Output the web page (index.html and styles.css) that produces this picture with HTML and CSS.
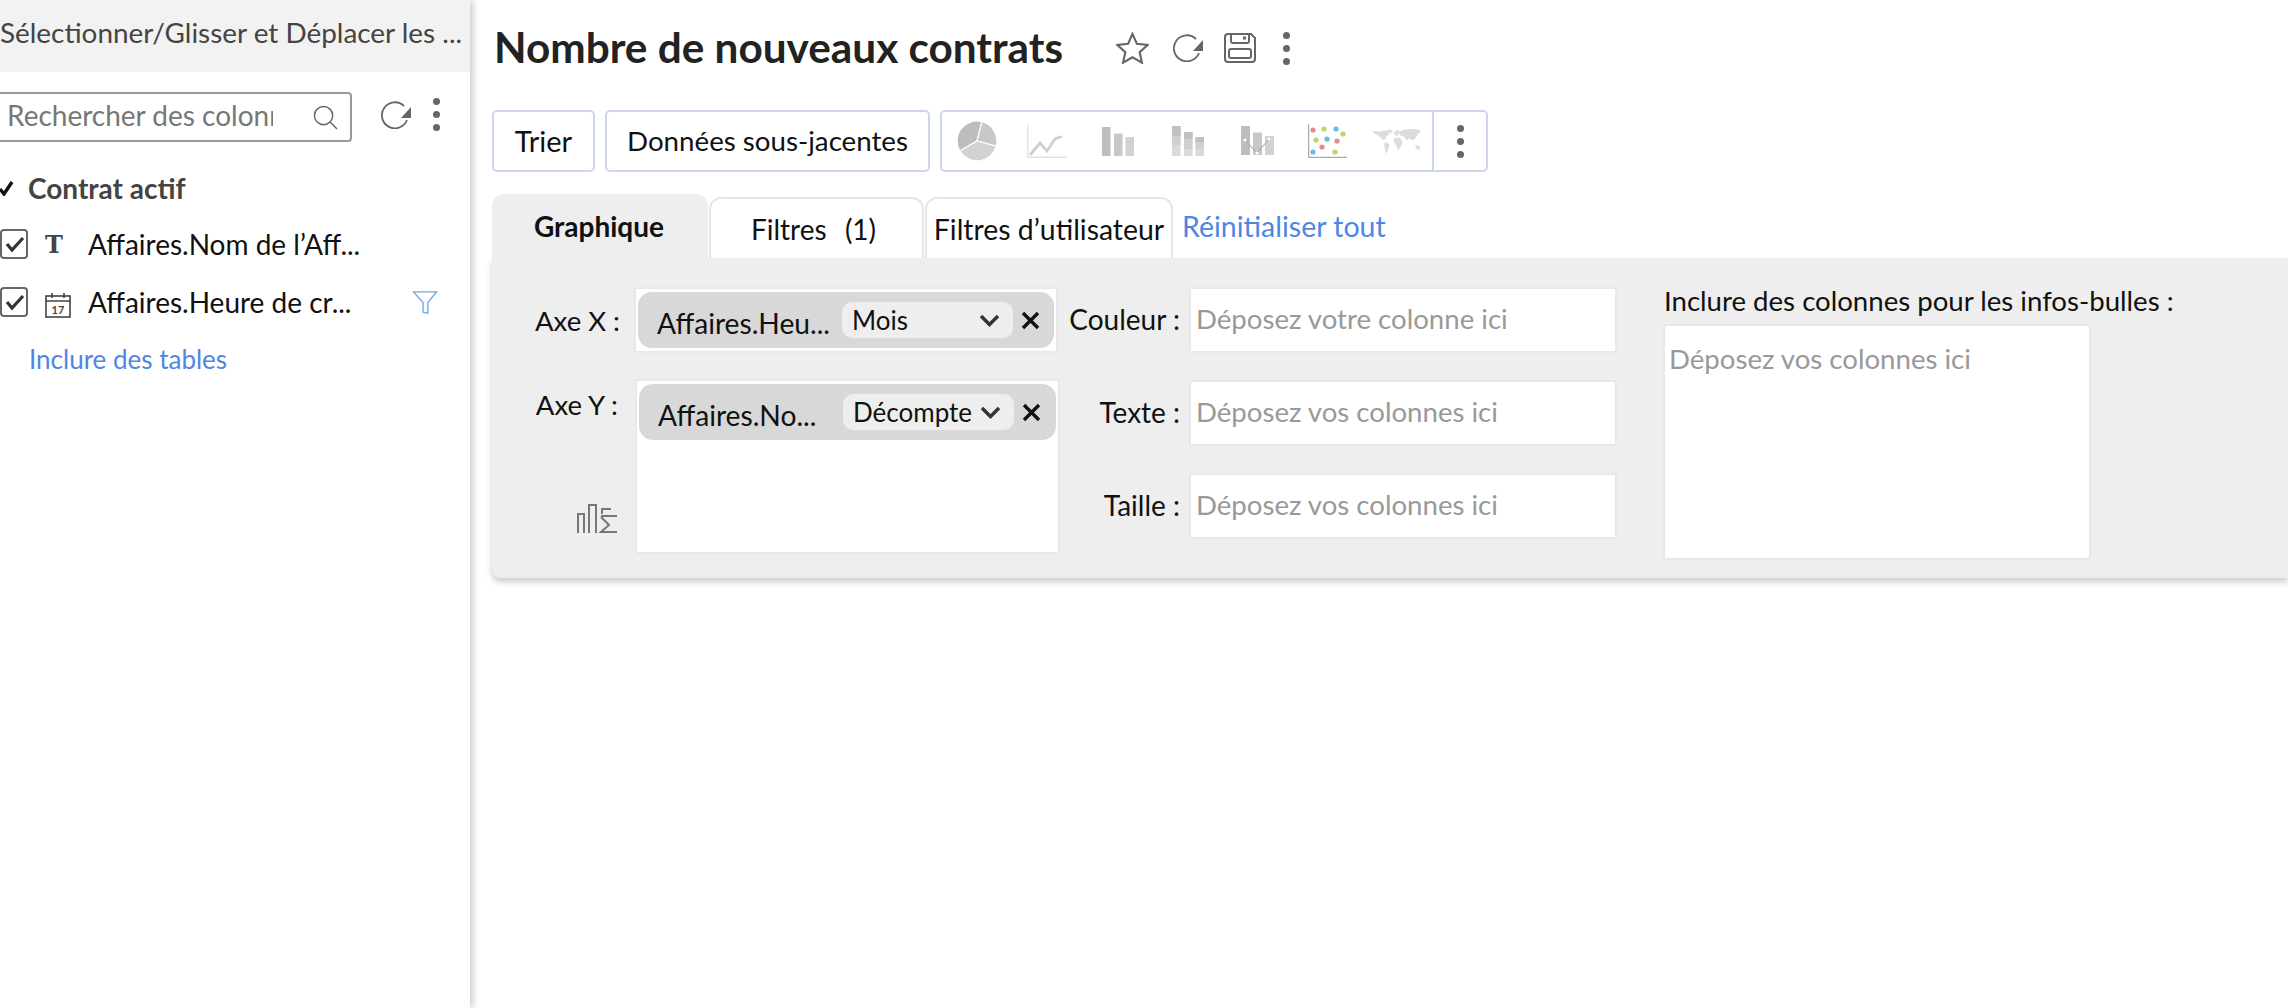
FILE: index.html
```html
<!DOCTYPE html>
<html lang="fr">
	<head>
		<meta charset="utf-8" />
		<title>Nombre de nouveaux contrats</title>
		<link rel="stylesheet" href="styles.css">
	</head>
	<body>
		<aside class="sidebar">
			<div class="sidebar-head">Sélectionner/Glisser et Déplacer les ...</div>
			<div class="search-row">
				<div class="search">
					<input class="search-input" type="text" placeholder="Rechercher des colonnes" />
					<svg viewBox="0 0 26 26" width="25" height="25" fill="none" stroke="#666" stroke-width="1.5"><circle cx="11" cy="11" r="9.5"/><path d="M17.5 17.5l7.5 7.5"/></svg>
				</div>
				<svg class="reload" viewBox="0 0 32 28" width="32" height="28" fill="none" stroke="#666" stroke-width="1.8"><path d="M27 19a13 13 0 1 1-3-14"/><path d="M31 6v11H21z" fill="#666" stroke="none"/></svg>
				<div class="dots side-dots"><i></i><i></i><i></i></div>
			</div>
			<div class="group">
				<svg class="tick" viewBox="0 0 14 16" width="14" height="16" fill="none" stroke="#111" stroke-width="3.4"><path d="M0 9l4 5 8-12"/></svg>
				<span>Contrat actif</span>
			</div>
			<div class="col-row">
				<span class="check"><svg viewBox="0 0 20 20" width="20" height="20" fill="none" stroke="#333" stroke-width="3.2"><path d="M2 10l5 6 11-12"/></svg></span>
				<span class="type-t">T</span>
				<span class="col-name">Affaires.Nom de l’Aff...</span>
			</div>
			<div class="col-row col-row-date">
				<span class="check"><svg viewBox="0 0 20 20" width="20" height="20" fill="none" stroke="#333" stroke-width="3.2"><path d="M2 10l5 6 11-12"/></svg></span>
				<svg class="type-date" viewBox="0 0 26 26" width="26" height="26" fill="none" stroke="#444" stroke-width="1.6"><rect x="1" y="4" width="24" height="21"/><path d="M1 9h24M7 1v5M19 1v5"/><text x="13" y="22" font-size="11" font-weight="700" fill="#444" stroke="none" text-anchor="middle">17</text></svg>
				<span class="col-name">Affaires.Heure de cr...</span>
				<svg class="filter-icon" viewBox="0 0 26 26" width="26" height="25" fill="none" stroke="#6ea6e6" stroke-width="1.4"><path d="M1 2h24L16 13v11l-5-1V13z"/></svg>
			</div>
			<a class="include">Inclure des tables</a>
		</aside>

		<main class="main">
			<div class="title-row">
				<h1>Nombre de nouveaux contrats</h1>
				<div class="title-icons">
					<svg viewBox="0 0 34 33" width="33" height="32" fill="none" stroke="#666" stroke-width="2.2"><path d="M17 2l4.6 10.2 11 1.2-8.2 7.4 2.3 10.8-9.7-5.5-9.7 5.5 2.3-10.8-8.2-7.4 11-1.2z"/></svg>
					<svg class="icon-reload" viewBox="0 0 32 28" width="32" height="28" fill="none" stroke="#666" stroke-width="1.8"><path d="M27 19a13 13 0 1 1-3-14"/><path d="M31 6v11H21z" fill="#666" stroke="none"/></svg>
					<svg class="icon-save" viewBox="0 0 32 30" width="32" height="30" fill="none" stroke="#666" stroke-width="2"><path d="M1 4a3 3 0 0 1 3-3h23l4 4v21a3 3 0 0 1-3 3H4a3 3 0 0 1-3-3z"/><path d="M7 1v7a2 2 0 0 0 2 2h14a2 2 0 0 0 2-2V1"/><rect x="5" y="16" width="22" height="9" rx="2"/><path d="M19 3.500h3v3h-3z" fill="#666" stroke="none"/></svg>
					<div class="dots title-dots"><i></i><i></i><i></i></div>
				</div>
			</div>

			<div class="toolbar">
				<button class="tool-btn btn-sort">Trier</button>
				<button class="tool-btn btn-data">Données sous-jacentes</button>
				<div class="chart-picker">
					<div class="chart-icons">
						<svg class="chart-pie" viewBox="0 0 40 40" width="40" height="40" stroke="#fff" stroke-width="1.2"><path d="M20 20L25 .6A20 20 0 0 0 2.800 30.100z" fill="#bdbdbd"/><path d="M20 20L25 .6A20 20 0 0 1 39.300 25.200z" fill="#c8c8c8"/><path d="M20 20L39.300 25.200A20 20 0 0 1 2.800 30.100z" fill="#d2d2d2"/></svg>
						<svg class="chart-line" viewBox="0 0 40 33" width="40" height="33" fill="none"><path d="M.7 0v32.300H40" stroke="#e2e2e2" stroke-width="1.4"/><path d="M3 30l10-12 7 8 8-12 7-2.500" stroke="#d0d0d0" stroke-width="2.800"/></svg>
						<svg class="chart-bar" viewBox="0 0 32 29" width="32" height="29"><rect width="8.500" height="29" fill="#bdbdbd"/><rect x="12" y="6.500" width="8.500" height="22.500" fill="#c8c8c8"/><rect x="23.500" y="10" width="8.500" height="19" fill="#d2d2d2"/></svg>
						<svg class="chart-stack" viewBox="0 0 32 30" width="32" height="30"><rect width="8.500" height="30" fill="#dadada"/><rect width="8.500" height="19" fill="#cfcfcf"/><rect width="8.500" height="9.500" fill="#c0c0c0"/><rect x="12" y="6" width="8.500" height="24" fill="#dadada"/><rect x="12" y="6" width="8.500" height="17" fill="#cfcfcf"/><rect x="12" y="6" width="8.500" height="7" fill="#c0c0c0"/><rect x="23.500" y="11" width="8.500" height="19" fill="#dadada"/><rect x="23.500" y="11" width="8.500" height="12" fill="#cfcfcf"/><rect x="23.500" y="11" width="8.500" height="5" fill="#c0c0c0"/></svg>
						<svg class="chart-combo" viewBox="0 0 33 30" width="33" height="30"><rect width="9" height="29" fill="#bdbdbd"/><rect x="12" y="6.500" width="9" height="22.500" fill="#c8c8c8"/><rect x="24" y="10" width="9" height="19" fill="#d2d2d2"/><path d="M4 14l12 13 12-14" fill="none" stroke="#aaa" stroke-width="1.1"/><circle cx="4" cy="14" r="1.500" fill="#fff"/><circle cx="16" cy="27" r="1.500" fill="#fff"/><circle cx="28" cy="13" r="1.500" fill="#fff"/></svg>
						<svg class="chart-scatter" viewBox="0 0 39 34" width="39" height="34"><path d="M.6 0v33.400H39" fill="none" stroke="#aaa" stroke-width="1.2"/><circle cx="5" cy="6" r="2.600" fill="#e58a8f"/><circle cx="16" cy="5" r="2.600" fill="#c3d26a"/><circle cx="28" cy="5" r="2.600" fill="#62c0e4"/><circle cx="35" cy="10" r="2.600" fill="#c3d26a"/><circle cx="8" cy="16" r="2.600" fill="#c3d26a"/><circle cx="19" cy="15" r="2.600" fill="#62c0e4"/><circle cx="29" cy="17" r="2.600" fill="#e58a8f"/><circle cx="14" cy="23" r="2.600" fill="#e58a8f"/><circle cx="5" cy="28" r="2.600" fill="#62c0e4"/><circle cx="27" cy="28" r="2.600" fill="#c3d26a"/></svg>
						<svg class="chart-map" viewBox="0 0 145 80" width="49" height="27" fill="#dcdcdc"><path d="M0 8l20 2 10-2 25-2-5 12-8 8-6 10-8-4-8-10-12-4z"/><path d="M52 4l10 4-6 8-6-6z"/><path d="M38 40l14 8-4 14-6 16-4-16-2-12z"/><path d="M66 10l12-4 4 8-6 8-6 2-4-6z"/><path d="M64 30l16-2 8 8 2 8-6 14-8 8-4-14-6-8z"/><path d="M80 10l20-6 30-2 15 6-10 12-7 10-8 8-8-8-10 6-6-10-12-4z"/><path d="M128 50l14 4v10l-12-2z"/></svg>
					</div>
					<div class="picker-more"><div class="dots"><i></i><i></i><i></i></div></div>
				</div>
			</div>

			<div class="tabs">
				<div class="tab tab-active">Graphique</div>
				<div class="tab tab-filters">Filtres&nbsp; (1)</div>
				<div class="tab tab-user">Filtres d’utilisateur</div>
				<a class="reset">Réinitialiser tout</a>
			</div>

			<section class="panel">
				<div class="axes">
					<div class="axis-row axis-x">
						<span class="label">Axe X :</span>
						<div class="drop">
							<div class="chip">
								<span class="chip-name">Affaires.Heu...</span>
								<div class="chip-select"><span>Mois</span><svg viewBox="0 0 21 13" width="21" height="13" fill="none" stroke="#333" stroke-width="3.4"><path d="M2 2l8.500 8.500L19 2"/></svg></div>
								<svg class="chip-x" viewBox="0 0 19 19" width="19" height="19" fill="none" stroke="#111" stroke-width="3.4"><path d="M2 2l15 15M17 2L2 17"/></svg>
							</div>
						</div>
					</div>
					<div class="axis-row axis-y">
						<div class="label-col">
							<span class="label">Axe Y :</span>
							<svg viewBox="0 0 41 30" width="41" height="30" fill="none" stroke="#777" stroke-width="2"><path d="M1 29V10h6v19M12 29V1h7v28M25 10V5h9M24 12h16M24 13l8 8-8 7h16"/></svg>
						</div>
						<div class="drop drop-tall">
							<div class="chip">
								<span class="chip-name">Affaires.No...</span>
								<div class="chip-select"><span>Décompte</span><svg viewBox="0 0 21 13" width="21" height="13" fill="none" stroke="#333" stroke-width="3.4"><path d="M2 2l8.500 8.500L19 2"/></svg></div>
								<svg class="chip-x" viewBox="0 0 19 19" width="19" height="19" fill="none" stroke="#111" stroke-width="3.4"><path d="M2 2l15 15M17 2L2 17"/></svg>
							</div>
						</div>
					</div>
				</div>
				<div class="fields">
					<div class="field"><span class="label">Couleur :</span><div class="field-box">Déposez votre colonne ici</div></div>
					<div class="field"><span class="label">Texte :</span><div class="field-box">Déposez vos colonnes ici</div></div>
					<div class="field"><span class="label">Taille :</span><div class="field-box">Déposez vos colonnes ici</div></div>
				</div>
				<div class="tooltips">
					<div class="tooltips-label">Inclure des colonnes pour les infos-bulles :</div>
					<div class="tooltips-box">Déposez vos colonnes ici</div>
				</div>
			</section>
		</main>
	</body>
</html>
```

FILE: styles.css
```css
* {
	box-sizing: border-box;
}

body {
	margin: 0;
	display: flex;
	height: 1008px;
	overflow: hidden;
	background: #fff;
	color: #111;
	font-family: Lato, 'Open Sans', sans-serif;
	font-size: 28px;
}

svg {
	display: block;
	flex: none;
}

.dots {
	display: flex;
	flex-direction: column;
	gap: 6px;
}

.dots i {
	display: block;
	width: 7px;
	height: 7px;
	border-radius: 50%;
	background: #666;
}

/* left column */

.sidebar {
	width: 470px;
	flex: none;
	box-shadow: 3px 0 7px rgba(0, 0, 0, 0.2);
	z-index: 1;
}

.sidebar-head {
	height: 72px;
	padding-top: 15px;
	background: #f2f2f2;
	color: #444;
	font-size: 27.900px;
	white-space: nowrap;
}

.search-row {
	display: flex;
	align-items: center;
	margin-top: 20px;
	height: 50px;
}

.search {
	display: flex;
	align-items: center;
	justify-content: space-between;
	width: 356px;
	height: 50px;
	margin-left: -4px;
	padding: 0 12px 0 9px;
	border: 2px solid #999;
	border-radius: 4px;
}

.search-input {
	width: 266px;
	margin-top: -5px;
	padding: 0;
	border: 0;
	outline: none;
	background: none;
	font: inherit;
	font-size: 28px;
}

.search-input::placeholder {
	color: #777;
	opacity: 1;
}

.reload {
	margin: -5px 0 0 28px;
}

.side-dots {
	margin: -5px 0 0 21px;
}

.group {
	display: flex;
	align-items: center;
	margin-top: 28px;
	height: 36px;
	color: #444;
	font-weight: 700;
	font-size: 28px;
}

.tick {
	margin-right: 14px;
}

.col-row {
	display: flex;
	align-items: center;
	height: 40px;
	margin-top: 18px;
}

.col-row-date {
	margin-top: 18px;
}

.check {
	width: 28px;
	height: 30px;
	padding: 3px;
	border: 2px solid #666;
	border-radius: 4px;
}

.type-t {
	width: 18px;
	margin-left: 17px;
	color: #444;
	font-family: 'DejaVu Serif', serif;
	font-weight: 700;
	font-size: 24px;
}

.type-date {
	margin: 6px -8px 0 17px;
}

.col-name {
	margin-left: 25px;
	white-space: nowrap;
}

.filter-icon {
	margin-left: auto;
	margin-right: 32px;
}

.include {
	display: block;
	margin: 21px 0 0 29px;
	color: #4f86e4;
	font-size: 26px;
}

/* main column */

.main {
	flex: 1;
	min-width: 0;
	padding-left: 22px;
}

.title-row {
	display: flex;
	align-items: center;
	height: 96px;
}

h1 {
	margin: 0 0 4px 2px;
	color: #222;
	font-size: 42.300px;
	font-weight: 700;
	white-space: nowrap;
}

.title-icons {
	display: flex;
	align-items: center;
	margin-left: 53px;
}

.icon-reload {
	margin-left: 23px;
}

.icon-save {
	margin-left: 20px;
}

.title-dots {
	margin-left: 27px;
}

.toolbar {
	display: flex;
	gap: 10px;
	height: 62px;
	margin-top: 14px;
}

.tool-btn {
	height: 62px;
	padding: 0 0 2px;
	border: 2px solid #cdd6ec;
	border-radius: 5px;
	background: #fff;
	color: #111;
	font: inherit;
	font-size: 27.700px;
}

.btn-sort {
	width: 103px;
	font-size: 29px;
}

.btn-data {
	width: 325px;
}

.chart-picker {
	display: flex;
	width: 548px;
	height: 62px;
	border: 2px solid #cdd6ec;
	border-radius: 5px;
}

.chart-icons {
	display: flex;
	align-items: center;
	flex: 1;
	padding-left: 15px;
}

.chart-line {
	margin-left: 30px;
}

.chart-bar {
	margin-left: 35px;
}

.chart-stack {
	margin-left: 38px;
}

.chart-combo {
	margin-left: 37px;
}

.chart-scatter {
	margin-left: 34px;
}

.chart-map {
	margin-left: 25px;
}

.picker-more {
	display: flex;
	align-items: center;
	justify-content: center;
	width: 54px;
	border-left: 2px solid #cdd6ec;
}

.tabs {
	display: flex;
	align-items: flex-end;
	height: 64px;
	margin-top: 22px;
}

.tab {
	display: flex;
	align-items: center;
	justify-content: center;
	height: 61px;
	border: 2px solid #e6e6e6;
	border-bottom: 0;
	border-radius: 12px 12px 0 0;
	background: #fff;
	font-size: 28px;
	white-space: nowrap;
}

.tab-active {
	width: 216px;
	height: 64px;
	margin-right: 1px;
	padding-right: 2px;
	border: 0;
	background: #eee;
	font-weight: 700;
}

.tab-filters {
	width: 215px;
	margin-right: 1px;
	padding-right: 6px;
	word-spacing: 2px;
}

.tab-user {
	width: 248px;
	font-size: 28.400px;
}

.reset {
	align-self: center;
	margin-left: 9px;
	color: #4f86e4;
	font-size: 28.500px;
}

.panel {
	display: flex;
	height: 320px;
	padding-top: 29px;
	border-radius: 0 0 0 8px;
	background: #eee;
	box-shadow: 0 4px 6px rgba(0, 0, 0, 0.2);
}

.label {
	white-space: nowrap;
}

.axes {
	width: 568px;
	flex: none;
}

.axes .label {
	font-size: 27.500px;
}

.axis-row {
	display: flex;
	justify-content: flex-end;
}

.axis-x {
	align-items: center;
	padding-right: 2px;
}

.axis-x .label {
	margin-right: 14px;
}

.axis-y {
	margin-top: 26px;
}

.label-col {
	display: flex;
	flex-direction: column;
	align-items: flex-end;
	justify-content: space-between;
	height: 175px;
	margin-right: 17px;
	padding: 9px 0 20px;
}

.drop {
	width: 424px;
	padding: 3px 2px;
	border: 2px solid #e8e8e8;
	border-radius: 3px;
	background: #fff;
}

.drop-tall {
	width: 425px;
	height: 175px;
}

.chip {
	display: flex;
	align-items: center;
	height: 56px;
	padding-left: 19px;
	border-radius: 14px;
	background: #d8d8d8;
}

.chip-name {
	width: 185px;
	padding-top: 6px;
	white-space: nowrap;
	font-size: 28.200px;
}

.chip-select {
	display: flex;
	align-items: center;
	justify-content: space-between;
	width: 171px;
	height: 36px;
	padding: 0 13px 0 10px;
	border-radius: 10px;
	background: #eee;
	white-space: nowrap;
	font-size: 26px;
}

.chip-x {
	margin-left: 8px;
}

.fields {
	display: flex;
	flex-direction: column;
	gap: 27px;
	width: 557px;
	flex: none;
}

.field {
	display: flex;
	align-items: center;
	justify-content: flex-end;
	gap: 9px;
}

.field .label {
	padding-bottom: 2px;
}

.field-box,
.tooltips-box {
	width: 428px;
	border: 2px solid #e8e8e8;
	border-radius: 3px;
	background: #fff;
	color: #999;
	font-size: 27.600px;
	white-space: nowrap;
}

.field-box {
	height: 66px;
	padding: 13px 5px;
}

.tooltips {
	margin-left: 46px;
}

.tooltips-label {
	height: 37px;
	padding-left: 1px;
	line-height: 28px;
	font-size: 27.600px;
	white-space: nowrap;
}

.tooltips-box {
	height: 236px;
	padding: 16px 4px;
}
```
